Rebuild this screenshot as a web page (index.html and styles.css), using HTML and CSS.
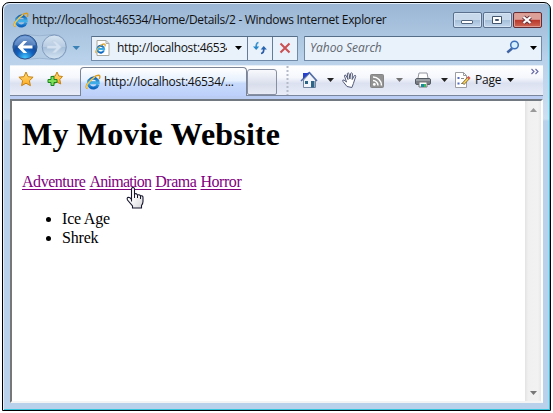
FILE: index.html
```html
<!DOCTYPE html>
<html lang="en">
<head>
<meta charset="utf-8">
<title>My Movie Website</title>
<link rel="stylesheet" href="styles.css">
</head>
<body>
<svg class="defs" width="0" height="0">
  <defs>
    <linearGradient id="eblue" x1="0" y1="0" x2="0" y2="1"><stop offset="0" stop-color="#1465b4"/><stop offset=".5" stop-color="#45b6ed"/><stop offset="1" stop-color="#0d64bd"/></linearGradient>
    <linearGradient id="star" x1="0" y1="0" x2="0" y2="1"><stop offset="0" stop-color="#ffe080"/><stop offset="1" stop-color="#ffa81d"/></linearGradient>
    <radialGradient id="back" cx=".5" cy=".95" r=".9"><stop offset="0" stop-color="#43c8ff"/><stop offset=".4" stop-color="#1260bd"/><stop offset=".6" stop-color="#164f9f"/><stop offset="1" stop-color="#5c8ed0"/></radialGradient>
    <linearGradient id="fwd" x1="0" y1="0" x2="0" y2="1"><stop offset="0" stop-color="#d8e5f3"/><stop offset=".48" stop-color="#b8cce2"/><stop offset=".5" stop-color="#a4bdd8"/><stop offset="1" stop-color="#d5e5f4"/></linearGradient>
    <linearGradient id="hand" x1="0" y1="0" x2="1" y2="1"><stop offset=".4" stop-color="#fff"/><stop offset="1" stop-color="#d5d5d9"/></linearGradient>
    <symbol id="ie" viewBox="0 0 16 16">
      <path d="M2.500 14.500C.6 14.500.8 12.300 2.300 9.900 5 5.600 10.500 1.100 13.600 1.300 15.300 1.500 15 3.500 14.200 5" fill="none" stroke="#d99a1c" stroke-width="1.500"/>
      <path d="M13 10.500A4.900 4.900 0 1 1 13.200 8.700H5" fill="none" stroke="url(#eblue)" stroke-width="3"/>
      <path d="M2.500 13.800C1 13.700 1.200 12.200 2.700 9.900 4.500 7.200 7.500 4.300 10 2.900" fill="none" stroke="#f8c842" stroke-width="1.300"/>
    </symbol>
  </defs>
</svg>
<div class="window">
  <header class="titlebar">
    <svg class="logo" width="16" height="16"><use href="#ie"/></svg>
    <span class="title">http://localhost:46534/Home/Details/2 - Windows Internet Explorer</span>
    <div class="controls">
      <button class="control" aria-label="Minimize"><svg width="27" height="14"><rect x="7.5" y="7.5" width="11" height="3" rx=".5" fill="#fff" stroke="#52677f"/></svg></button>
      <button class="control" aria-label="Maximize"><svg width="27" height="14"><path d="M8.500 3.500h9v7h-9zM11.500 6.500h3v1h-3z" fill="#fff" fill-rule="evenodd" stroke="#42556c"/></svg></button>
      <button class="control close" aria-label="Close"><svg width="27" height="14"><path d="M9.500 4l7 6M16.500 4l-7 6" stroke="#68313a" stroke-width="4.200"/><path d="M9.500 4l7 6M16.500 4l-7 6" stroke="#fff" stroke-width="2.300"/></svg></button>
    </div>
  </header>

  <nav class="navbar">
    <svg class="travel" width="78" height="28" viewBox="0 0 78 28">
      <path d="M14 1.500Q29 4 43 1.500A12.500 12.500 0 0 1 43 26.500Q29 24 14 26.500A12.500 12.500 0 0 1 14 1.500z" fill="#b4cbe4" stroke="#90abc9" stroke-width=".7"/>
      <circle cx="14" cy="14" r="12" fill="url(#back)" stroke="#30568c"/>
      <path d="M3.500 12A10.700 10.700 0 0 1 24.500 12Q14 15 3.500 12z" fill="#fff" opacity=".22"/>
      <path d="M6.500 14l6-6h3.700l-4.200 4.500h9.500v3H12l4.200 4.500h-3.700z" fill="#fff"/>
      <circle cx="43.200" cy="14" r="12" fill="url(#fwd)" stroke="#7f9bbd"/>
      <path d="M50.500 14l-6-6h-3.700l4.200 4.500h-9v3h9l-4.200 4.500h3.700z" fill="#d3e1f0" stroke="#bccee2" stroke-width=".6"/>
      <path d="M61.500 13h7.500l-3.700 4z" fill="#3a82b6"/>
    </svg>
    <div class="address">
      <svg class="page" width="16" height="16" viewBox="0 0 16 16"><path d="M2 .5h9l3 3v12H2z" fill="#fff" stroke="#a9a9a0"/><path d="M11 .5v3h3" fill="none" stroke="#aaa"/><use href="#ie" x="0" y="3" width="11" height="11"/></svg>
      <span class="url">http://localhost:46534</span>
      <svg class="drop" width="7" height="4"><path d="M0 0h7L3.500 4z"/></svg>
      <span class="box"><svg width="16" height="16" viewBox="0 0 16 16"><path d="M6.500 2.500Q4 3 4.200 7" fill="none" stroke="#3a93cf" stroke-width="1.700"/><path d="M1 6.500h6.200L4.200 10z" fill="#2387c9"/><path d="M9 13.500Q12 13 11.700 9" fill="none" stroke="#2c5ca8" stroke-width="1.700"/><path d="M8.700 9.500h6.200L11.700 6z" fill="#2464b0"/></svg></span>
      <span class="box"><svg width="14" height="14" viewBox="0 0 14 14"><path d="M2.500 2.500l9 9M11.500 2.500l-9 9" stroke="#cb5052" stroke-width="2"/></svg></span>
    </div>
    <div class="search">
      <span class="hint">Yahoo Search</span>
      <svg class="glass" width="14" height="14" viewBox="0 0 14 14"><path d="M6 8.500l-4.700 4" stroke="#3e63a4" stroke-width="2.500"/><circle cx="8.500" cy="5" r="3.800" fill="#d5efff" stroke="#3d6fb8" stroke-width="1.500"/></svg>
      <svg class="drop" width="7" height="4"><path d="M0 0h7L3.500 4z"/></svg>
    </div>
  </nav>

  <div class="toolbar">
    <div class="favorites">
      <svg width="16" height="16" viewBox="0 0 16 16"><path d="M8 1l2.100 4.700 5 .5-3.700 3.500 1 5L8 12.200l-4.400 2.500 1-5L.9 6.200l5-.5z" fill="url(#star)" stroke="#c58213"/></svg>
      <svg width="16" height="16" viewBox="0 0 16 16"><path d="M10 1l1.800 4 3.700.5-2.700 3 .9 4.500-3.700-2-3.700 2 .8-4.500-2.900-3 4-.5z" fill="url(#star)" stroke="#c58213"/><path d="M4 5.500h3v3h3v3H7v3H4v-3H1v-3h3z" fill="#7fe058" stroke="#178522"/></svg>
    </div>
    <div class="tab">
      <svg width="16" height="16"><use href="#ie"/></svg>
      <span class="tabtext">http://localhost:46534/...</span>
    </div>
    <div class="newtab"></div>
    <div class="commands">
      <svg class="tools" width="254" height="29" viewBox="0 0 254 29">
        <path d="M1.500 0v29" stroke="#b4bac8" stroke-width="2" stroke-dasharray="2 2"/>
        <g transform="translate(-1)">
        <path d="M18.500 14v7.500h12V14l-6-6.500z" fill="#f1f5fb" stroke="#7686a1"/>
        <path d="M16 15l8.500-8.500L32 15" fill="none" stroke="#526da5" stroke-width="1.500"/>
        <path d="M18 12V7h4l3-1-7 7z" fill="#2440cc"/>
        <path d="M20 15h3v3h-3zM26 15h3.500v6.500H26z" fill="#2d6589"/>
        <path d="M42 12h7l-3.500 4z" fill="#222"/>
        </g>
        <path d="M61 20.500l-4-5q-1-2 1-1.500l2.500 2-2-6q0-1.500 1.500-.7l2 4.200-.7-6q.8-1.300 1.700 0l.9 5.500.8-5.700q1-1 1.700.2l-.2 6 2.200-4q1.500-.6 1.300 1l-2.300 7-1.500 4z" fill="#fff" stroke="#535a78" stroke-width="1"/>
        <g transform="translate(-1)">
        <rect x="85.500" y="8.500" width="13" height="13" rx="1" fill="#929292" stroke="#858585"/>
        <path d="M88 14.500a5 5 0 0 1 5 5M88 11a8.500 8.500 0 0 1 8.500 8.500" fill="none" stroke="#fff" stroke-width="1.500"/><circle cx="89.300" cy="18.400" r="1.400" fill="#fff"/>
        <path d="M111 12h7l-3.500 4z" fill="#737373"/>
        <path d="M133 12l1-5h8l1 5" fill="#fff" stroke="#92969e"/><rect x="130.500" y="12.500" width="15" height="6" rx="1.500" fill="#777c83" stroke="#555b63"/><path d="M131 14h14" stroke="#c1c5c9"/><path d="M134 16h8v5h-8z" fill="#fff" stroke="#777"/><path d="M136 18h3v3h-3z" fill="#178d9c"/><path d="M139 18h2v3h-2z" fill="#48b65a"/>
        <path d="M156 12h7l-3.500 4z" fill="#222"/>
        <path d="M170.500 6.500h8l3 3v12h-11z" fill="#fff" stroke="#9b9da3"/><path d="M178.500 6.500v3h3" fill="none" stroke="#999"/><path d="M172.500 12h2M172.500 17.500h2" stroke="#526bbf" stroke-width="2"/><path d="M176 12.500h3M176 17.500h2" stroke="#888"/><path d="M178 18l5.500-6" stroke="#7d6a39" stroke-width="3"/><path d="M178.500 17.500l5-5.500" stroke="#ffd55a" stroke-width="1.600"/><path d="M183 12.500l1.500-1.500" stroke="#d85751" stroke-width="3"/>
        <path d="M222 12h7l-3.500 4z" fill="#111"/>
        </g>
        <path d="M245.500 3l2.500 2.500-2.500 2.500M249.500 3l2.500 2.500-2.500 2.500" fill="none" stroke="#6568a7" stroke-width="1.100"/>
      </svg>
      <span class="pagelabel">Page</span>
    </div>
  </div>

  <div class="viewport">
    <main class="content">
      <h1>My Movie Website</h1>
      <div class="links"><a href="#">Adventure</a> <a class="tight" href="#">Animation</a> <a href="#">Drama</a> <a href="#">Horror</a></div>
      <ul><li>Ice Age</li><li>Shrek</li></ul>
    </main>
    <div class="scrollbar">
      <svg width="7" height="4"><path d="M0 4h7L3.500 0z" fill="#999"/></svg>
      <svg width="7" height="4"><path d="M0 0h7L3.500 4z" fill="#777"/></svg>
    </div>
  </div>
</div>
<svg class="cursor" width="18" height="23" viewBox="0 0 18 23"><path d="M5.500 14.500V2q0-1.500 1.500-1.500T8.500 2v5q2-1 3 1 2-.8 3 .9 2.500-.6 2.500 1.600v4q0 2-1.500 4v2.500h-9V19l-5-6q-1-2.500 1-2.700 1.500 0 3 2.200z" fill="url(#hand)" stroke="#17172e" stroke-width="1.100"/><path d="M8.500 6v5M11.500 8v3M14.500 9v3" stroke="#17172e"/></svg>
</body>
</html>
```
FILE: styles.css
```css
* { box-sizing: border-box; }
body {
  margin: 0;
  padding: 2px;
  width: 553px;
  height: 413px;
  overflow: hidden;
  background: #fff;
  font: 12px "Open Sans", "Noto Sans", sans-serif;
  color: #111;
}
svg { display: block; flex: none; }
.defs { position: absolute; }
.window {
  width: 549px;
  height: 409px;
  border: 1px solid #000;
  border-radius: 7px 7px 0 0;
  padding: 0 7px 7px;
  background: linear-gradient(#9ab6d4, #b9d1ea 55px, #cddff1 116px, #b9d1ea 118px);
  box-shadow: inset 1px 1px #e2eefa, inset -1px -1px #35c4dc;
  display: flex;
  flex-direction: column;
}
.titlebar { height: 30px; display: flex; align-items: center; flex: none; padding: 4px 1px 0 3px; }
.title { margin-left: 3px; flex: 1; white-space: nowrap; font-size: 12px; letter-spacing: -.31px; line-height: 18px; }
.controls { display: flex; gap: 1px; margin-top: -1px; }
.control {
  width: 29px; height: 16px; padding: 0;
  border: 1px solid #5a708d; border-radius: 2px;
  background: linear-gradient(#c8d9eb 48%, #a5bfd9 52%, #c2d7ed);
  box-shadow: inset 0 0 0 1px #d5e4f4;
}
.close { background: linear-gradient(#dca099 45%, #b9382c 52%, #cf6855); border-color: #632d35; box-shadow: inset 0 0 0 1px #df9b91; }
.navbar { height: 32px; display: flex; align-items: center; flex: none; padding-right: 1px; }
.travel { margin: -4px 2px 0 1px; }
.address, .search {
  height: 25px; margin-top: -2px; display: flex; align-items: center;
  background: #e9f1fa; border: 1px solid #718aa7; border-top-color: #566d88; border-radius: 1px;
}
.address { width: 207px; padding-left: 3px; }
.url { width: 111px; margin: -2px 0 0 6px; overflow: hidden; white-space: nowrap; letter-spacing: -.35px; }
.address .drop { margin: 0 5px 0 8px; }
.box { width: 25px; height: 23px; flex: none; border-left: 1px solid #657c98; display: flex; align-items: center; justify-content: center; }
.search { width: 238px; margin-left: 6px; padding: 0 4px 0 5px; }
.hint { flex: 1; margin-top: -2px; font-style: italic; letter-spacing: -.05px; color: #5e6670; }
.glass { margin-right: 10px; margin-top: -3px; }
.toolbar {
  height: 31px; flex: none; display: flex; align-items: flex-end;
  background: linear-gradient(#fff, #f5f7fc 40%, #dce1f1 60%, #e9edf8);
  border-top: 1px solid #e6eef8; border-bottom: 1px solid #7a879d;
}
.favorites { width: 70px; height: 29px; display: flex; gap: 13px; padding: 5px 0 0 8px; }
.tab {
  width: 167px; height: 29px; display: flex; align-items: center; padding-left: 4px;
  border: 1px solid #7b8494; border-bottom: 0; border-radius: 4px 4px 0 0;
  background: linear-gradient(#fff, #e6f0fe 45%, #c8dafb 55%, #bdd0fa);
  margin-bottom: -1px;
}
.tabtext { margin: -1px 0 0 3px; white-space: nowrap; letter-spacing: -.28px; }
.newtab {
  width: 30px; height: 26px; border: 1px solid #8790a2; border-radius: 3px 3px 2px 2px;
  background: linear-gradient(#f8f9fd, #d9deec 60%, #e8ebf5);
}
.commands { position: relative; margin-left: 9px; width: 256px; height: 29px; }
.pagelabel { position: absolute; left: 189px; top: 5px; line-height: 18px; letter-spacing: -.2px; }
.viewport {
  flex: 1; min-height: 0; display: flex; position: relative; margin-top: 3px;
  background: #fff;
  border: 2px solid #6b7077; border-top-color: #737980; border-right-color: #fff; border-bottom-color: #f4f4f4;
  border-left-color: #777;
  box-shadow: 0 -3px #bccdf3;
}
.content { flex: 1; padding: 0 10px; font-family: "Liberation Serif", serif; font-size: 16px; color: #000; }
h1 { font-size: 32px; line-height: 37px; margin: 15px 0 0; white-space: nowrap; letter-spacing: .18px; }
.links { margin-top: 19px; line-height: 19px; letter-spacing: -.46px; word-spacing: .5px; }
a { color: #800080; text-decoration-thickness: 1px; text-underline-offset: 2px; }
.tight { letter-spacing: -.75px; }
ul { margin: 18px 0 0; padding-left: 40px; line-height: 19px; }
li { letter-spacing: -.2px; }
.scrollbar {
  width: 16px; display: flex; flex-direction: column; justify-content: space-between; align-items: center;
  padding: 7px 0 6px; background: linear-gradient(90deg, #e3e3e3, #f0f0f0 20%, #f2f2f2 80%, #e7e7e7);
}
.cursor { position: absolute; left: 126px; top: 187px; }
```
